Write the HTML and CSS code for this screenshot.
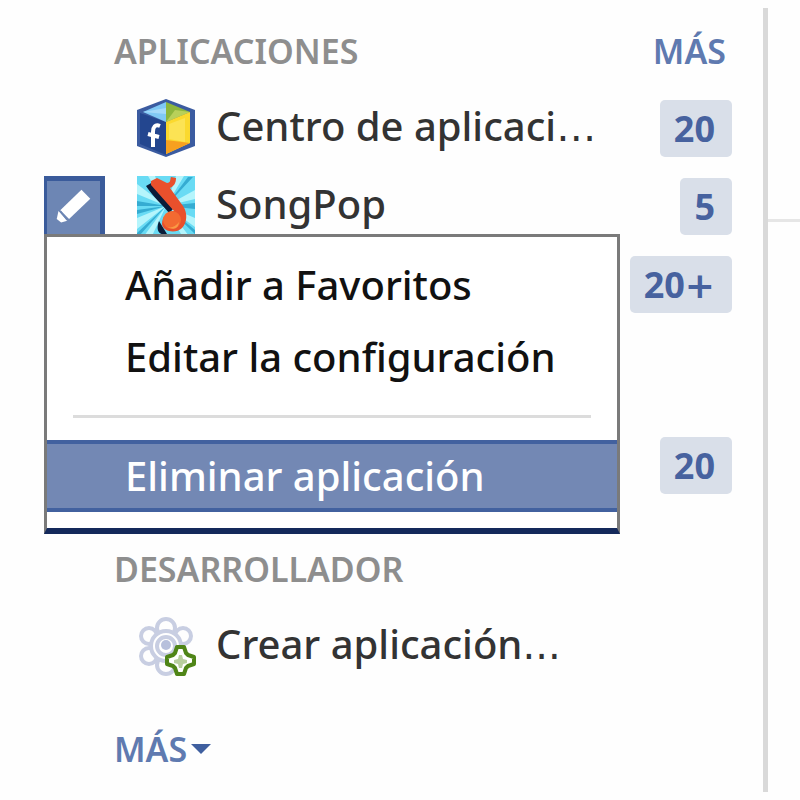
FILE: index.html
```html
<!DOCTYPE html>
<html lang="es">
<head>
    <meta charset="UTF-8">
    <meta name="viewport" content="width=device-width, initial-scale=1.0">
    <title>Aplicaciones</title>
    <link rel="stylesheet" href="styles.css">
</head>
<body>

    <nav class="sidebar">
        <!-- Applications -->
        <div class="section-header">
            <h2>APLICACIONES</h2>
            <a class="more" href="#">MÁS</a>
        </div>
        <ul class="app-list">
            <li class="app">
                <svg class="icon" viewBox="0 0 60 60" aria-hidden="true">
                    <path fill="#3b5ba0" d="M30 1 59 12v36L30 59 1 48V12z"/>
                    <path fill="#23468f" d="M4 15 30 24v33L4 46z"/>
                    <path fill="#80c9f5" d="M30 4v20L7 14z"/>
                    <path fill="#a5dafa" d="m7 14 23-4v6z"/>
                    <path fill="#8db63c" d="M30 4 54 14 30 24z"/>
                    <path fill="#b8d05a" d="m30 24 9-12 15 2z"/>
                    <path fill="#fbd92e" d="M30 24 54 14v31L30 56z"/>
                    <path fill="#fce354" d="m33 26 16-6v24l-16-3z"/>
                    <path fill="#f6a01f" d="m30 42 24 3-24 11z"/>
                    <path fill="none" stroke="#fff" stroke-width="4" d="M24 28c-5-2-7 1-7 6v15M12 36l11 3"/>
                </svg>
                <a class="name" href="#">Centro de aplicaci<span class="wide">…</span></a>
                <span class="count">20</span>
            </li>
            <li class="app">
                <svg class="icon" viewBox="0 0 60 60" aria-hidden="true">
                    <path fill="#69dbf4" d="M1 0h58v60H1z"/>
                    <path fill="#b5f5fc" d="M30 30 1 8v10zM30 30 1 42v11zM30 30 40 0h8zM30 30 59 14v9zM30 30l29 12v9zM30 30 8 60h8zM30 30 12 0h7zM30 30l16 30h7z"/>
                    <path fill="#35acd2" d="M30 30 1 25v5zM30 30 1 34v4zM30 30 52 1h5zM30 30l29-3v6zM30 30l29 24v4zM30 30 1 57v2h3z"/>
                    <path fill="#0b1c38" d="m10 10 7-4 21 26-5 5c-7-9-15-15-23-27zM23 45l8 13c-7 2-12-3-8-13z"/>
                    <path fill="#e9502c" d="m15 5 6-3 10 5c4 0 3-4 4-6l5 1c0 5-2 8-6 10l13 18c5 7 4 17-1 22-6 6-19 4-20-4 0-7 4-11 12-13L15 9z"/>
                    <circle cx="36" cy="44" r="9" fill="#f36a31"/>
                    <path fill="#f99b45" d="M31 51q7 2 12-5-1 10-12 5z"/>
                </svg>
                <a class="name" href="#">SongPop</a>
                <span class="count">5</span>

                <!-- Edit menu, open -->
                <div class="edit">
                    <button class="edit-button" type="button" aria-label="Editar" aria-expanded="true">
                        <svg viewBox="0 0 60 60" aria-hidden="true">
                            <path fill="#fff" d="m39 10 10 10-24 23-10-10z"/>
                            <path fill="#fff" d="m13 34 10 11-7 2-5-4z"/>
                            <path stroke="#6d86b4" stroke-width="2" d="m15 34 8 10"/>
                        </svg>
                    </button>
                    <ul class="menu">
                        <li><button type="button">Añadir a Favoritos</button></li>
                        <li><button type="button">Editar la configuración</button></li>
                        <li class="separator"></li>
                        <li><button class="selected" type="button">Eliminar aplicación</button></li>
                    </ul>
                </div>
            </li>
            <li class="app">
                <span class="count">20<span class="wide">+</span></span>
            </li>
            <li class="app spaced">
                <span class="count">20</span>
            </li>
        </ul>

        <!-- Developer -->
        <div class="section-header developer">
            <h2>DESARROLLADOR</h2>
        </div>
        <ul class="app-list">
            <li class="app">
                <svg class="icon" viewBox="0 0 60 60" aria-hidden="true">
                    <g fill="none" stroke="#c8cee2" stroke-width="4">
                        <circle cx="30" cy="12" r="9"/>
                        <circle cx="47" cy="20" r="8"/>
                        <circle cx="13" cy="20" r="8"/>
                        <circle cx="13" cy="40" r="8"/>
                        <circle cx="30" cy="49" r="9"/>
                        <circle cx="30" cy="30" r="15" fill="#fff"/>
                        <circle cx="30" cy="30" r="9"/>
                    </g>
                    <circle cx="30" cy="29" r="5" fill="#b7c0dc"/>
                    <path fill="#fff" stroke="#4f8517" stroke-width="4" stroke-linejoin="round" d="M41 31h7l2 6 2 2 6 2v7l-6 2-2 2-2 6h-7l-2-6-2-2-6-2v-7l6-2 2-2z"/>
                    <path fill="#b9cf9f" d="M43 39h3l1 4 4 1v3l-4 1-1 4h-3l-1-4-4-1v-3l4-1z"/>
                </svg>
                <a class="name" href="#">Crear aplicación<span class="wide">...</span></a>
            </li>
        </ul>
        <button class="more toggle" type="button">MÁS<span class="arrow"></span></button>
    </nav>

    <main class="content">
        <hr>
    </main>

</body>
</html>
```
FILE: styles.css
```css
* {
    box-sizing: border-box;
}
body {
    display: flex;
    min-height: 100vh;
    margin: 0;
    padding: 8px 0;
    background-color: #fefefe;
    font-family: "Noto Sans", "Open Sans", sans-serif;
    font-size: 40px;
    color: #333;
}
ul {
    margin: 0;
    padding: 0;
    list-style: none;
}
a {
    color: inherit;
    text-decoration: none;
}
button {
    border: none;
    background: none;
    font: inherit;
    cursor: pointer;
}
.sidebar {
    width: 96%;
    padding: 19px 31px 0 114px;
    border-right: 5px solid #d9d9d9;
}
.section-header {
    display: flex;
    justify-content: space-between;
    padding-right: 6px;
    line-height: 48px;
}
.section-header h2 {
    margin: 0;
    font-size: 34px;
    font-weight: 600;
    color: #8e8e8e;
}
.more {
    font-size: 34px;
    font-weight: 600;
    color: #5f7ab0;
}
.app-list {
    padding-top: 14px;
}
.app {
    position: relative;
    display: flex;
    align-items: center;
    height: 78px;
    padding-left: 22px;
}
.app.spaced {
    margin-top: 103px;
}
.icon {
    width: 60px;
    height: 60px;
    margin-right: 20px;
}
.name {
    padding-bottom: 4px;
    font-weight: 500;
    line-height: 60px;
    white-space: nowrap;
}
.wide {
    font-family: "DejaVu Sans", sans-serif;
    line-height: 1;
}
.count {
    margin-left: auto;
    padding: 0 17px 0 14px;
    border-radius: 5px;
    background-color: #d9dfe9;
    font-size: 36px;
    font-weight: 700;
    line-height: 57px;
    color: #47629f;
}

/* Edit button and its menu */
.edit {
    position: absolute;
    top: 9px;
    left: -70px;
    z-index: 1;
    width: 576px;
}
.edit-button {
    display: block;
    width: 61px;
    height: 58px;
    padding: 0;
    border: 3px solid #3a5b9b;
    border-width: 5px 5px 0 3px;
    background-color: #6d86b4;
}
.edit-button svg {
    display: block;
    width: 53px;
    height: 53px;
}
.menu {
    padding: 12px 0 16px;
    border: 3px solid #7a7a7a;
    border-bottom: 6px solid #14295b;
    background-color: #fff;
}
.menu button {
    display: block;
    width: 100%;
    padding: 0 0 0 78px;
    border: solid transparent;
    border-width: 4px 0;
    font-weight: 500;
    line-height: 64px;
    text-align: left;
    white-space: nowrap;
    color: #111;
}
.menu .selected {
    border-color: #42619f;
    background-color: #7388b4;
    color: #fff;
}
.separator {
    height: 3px;
    margin: 22px 26px;
    background-color: #dcdcdc;
}

.developer {
    margin-top: 41px;
}
.toggle {
    display: flex;
    align-items: center;
    gap: 4px;
    margin-top: 40px;
    padding: 0;
    line-height: 48px;
}
.arrow {
    border: 10px solid transparent;
    border-top-color: #3f5f9f;
    border-bottom: none;
}
.content {
    flex: 1;
    padding-top: 211px;
}
.content hr {
    margin: 0;
    border: none;
    border-top: 3px solid #e6e6e6;
}
```
